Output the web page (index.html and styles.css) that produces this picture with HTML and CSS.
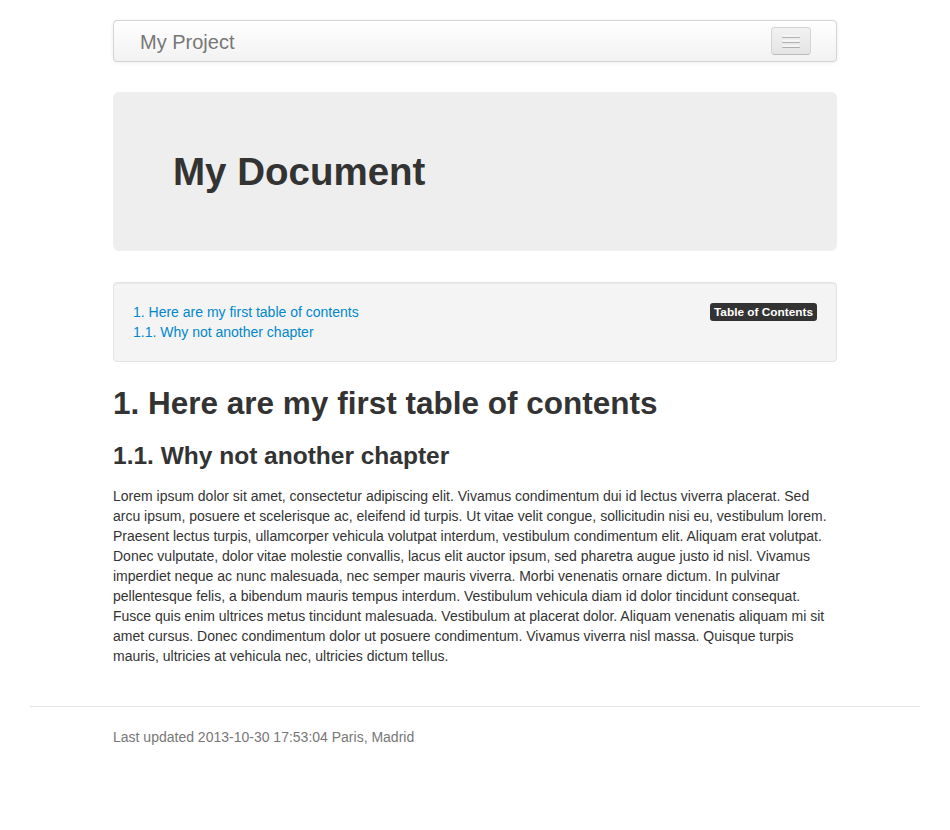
FILE: index.html
```html
<!DOCTYPE html>
<html lang="en">
<head>
    <meta charset="UTF-8">
    <meta name="viewport" content="width=device-width, initial-scale=1.0">
    <title>My Document</title>
    <link rel="stylesheet" href="styles.css">
</head>
<body>
    <div class="container">
        <div class="navbar">
            <div class="navbar-inner">
                <a class="brand" href="#">My Project</a>
                <button type="button" class="btn-navbar">
                    <span class="icon-bar"></span>
                    <span class="icon-bar"></span>
                    <span class="icon-bar"></span>
                </button>
            </div>
        </div>

        <div class="hero-unit">
            <h1>My Document</h1>
        </div>

        <div class="well toc">
            <span class="label label-inverse">Table of Contents</span>
            <ul class="toc-list">
                <li><a href="#chapter-1">1. Here are my first table of contents</a></li>
                <li><a href="#chapter-1-1">1.1. Why not another chapter</a></li>
            </ul>
        </div>

        <h2 id="chapter-1">1. Here are my first table of contents</h2>
        <h3 id="chapter-1-1">1.1. Why not another chapter</h3>
        <p>Lorem ipsum dolor sit amet, consectetur adipiscing elit. Vivamus condimentum dui id lectus viverra placerat. Sed arcu ipsum, posuere et scelerisque ac, eleifend id turpis. Ut vitae velit congue, sollicitudin nisi eu, vestibulum lorem. Praesent lectus turpis, ullamcorper vehicula volutpat interdum, vestibulum condimentum elit. Aliquam erat volutpat. Donec vulputate, dolor vitae molestie convallis, lacus elit auctor ipsum, sed pharetra augue justo id nisl. Vivamus imperdiet neque ac nunc malesuada, nec semper mauris viverra. Morbi venenatis ornare dictum. In pulvinar pellentesque felis, a bibendum mauris tempus interdum. Vestibulum vehicula diam id dolor tincidunt consequat. Fusce quis enim ultrices metus tincidunt malesuada. Vestibulum at placerat dolor. Aliquam venenatis aliquam mi sit amet cursus. Donec condimentum dolor ut posuere condimentum. Vivamus viverra nisl massa. Quisque turpis mauris, ultricies at vehicula nec, ultricies dictum tellus.</p>
    </div>

    <footer class="footer">
        <div class="container">
            <p>Last updated 2013-10-30 17:53:04 Paris, Madrid</p>
        </div>
    </footer>
</body>
</html>
```

FILE: styles.css
```css
* {
    box-sizing: border-box;
}

body {
    margin: 0;
    padding-top: 20px;
    font-family: "Liberation Sans", Arial, Helvetica, sans-serif;
    font-size: 14px;
    line-height: 20px;
    color: #333;
    background-color: #fff;
}

a {
    color: #0088cc;
    text-decoration: none;
}

.container {
    width: 724px;
    margin: 0 auto;
}

/* Navbar */
.navbar {
    margin-bottom: 30px;
}

.navbar-inner {
    display: flex;
    align-items: flex-start;
    justify-content: space-between;
    min-height: 42px;
    padding: 0 20px;
    background-color: #fafafa;
    background-image: linear-gradient(to bottom, #ffffff, #f2f2f2);
    border: 1px solid #d4d4d4;
    border-radius: 4px;
    box-shadow: 0 1px 4px rgba(0, 0, 0, 0.065);
}

.brand {
    display: block;
    padding: 11px 20px 9px 6px;
    font-size: 20px;
    line-height: 20px;
    color: #777;
}

.btn-navbar {
    display: block;
    margin: 6px 5px 0 5px;
    padding: 7px 10px;
    background-color: #ededed;
    background-image: linear-gradient(to bottom, #f2f2f2, #e5e5e5);
    border: 1px solid #cccccc;
    border-color: #d4d4d4 #d4d4d4 #bbbbbb;
    border-radius: 4px;
    box-shadow: inset 0 1px 0 rgba(255, 255, 255, 0.1), 0 1px 0 rgba(255, 255, 255, 0.075);
    cursor: pointer;
}

.icon-bar {
    display: block;
    width: 18px;
    height: 2px;
    background-color: #f5f5f5;
    border-radius: 1px;
    box-shadow: 0 1px 0 rgba(0, 0, 0, 0.25);
}

.icon-bar + .icon-bar {
    margin-top: 3px;
}

/* Hero */
.hero-unit {
    padding: 60px 60px 59px;
    margin-bottom: 31px;
    background-color: #eeeeee;
    border-radius: 6px;
}

.hero-unit h1 {
    margin: 0;
    font-size: 38.5px;
    line-height: 40px;
    font-weight: bold;
    color: #333;
}

/* TOC */
.well {
    padding: 19px;
    margin-bottom: 21px;
    background-color: #f4f4f4;
    border: 1px solid #e3e3e3;
    border-radius: 4px;
    box-shadow: inset 0 1px 1px rgba(0, 0, 0, 0.05);
}

.toc {
    display: flex;
    flex-direction: row-reverse;
    justify-content: space-between;
    align-items: flex-start;
}

.toc-list {
    margin: 0;
    padding: 0;
    list-style: none;
}

.label {
    display: inline-block;
    margin-top: 1px;
    padding: 2px 4px;
    font-size: 11.844px;
    font-weight: bold;
    line-height: 14px;
    color: #fff;
    white-space: nowrap;
    border-radius: 3px;
}

.label-inverse {
    background-color: #333333;
}

/* Content */
h2, h3 {
    font-weight: bold;
    line-height: 40px;
    color: #333;
}

h2 {
    margin: 0 0 13px;
    font-size: 31.5px;
}

h3 {
    margin: 0 0 10px;
    font-size: 24.5px;
}

p {
    margin: 0 0 10px;
}

/* Footer */
.footer {
    margin: 40px 30px 0;
    padding: 20px 0 40px;
    border-top: 1px solid #e5e5e5;
}

.footer .container {
    width: 724px;
}

.footer p {
    margin: 0;
    color: #777;
}
```
